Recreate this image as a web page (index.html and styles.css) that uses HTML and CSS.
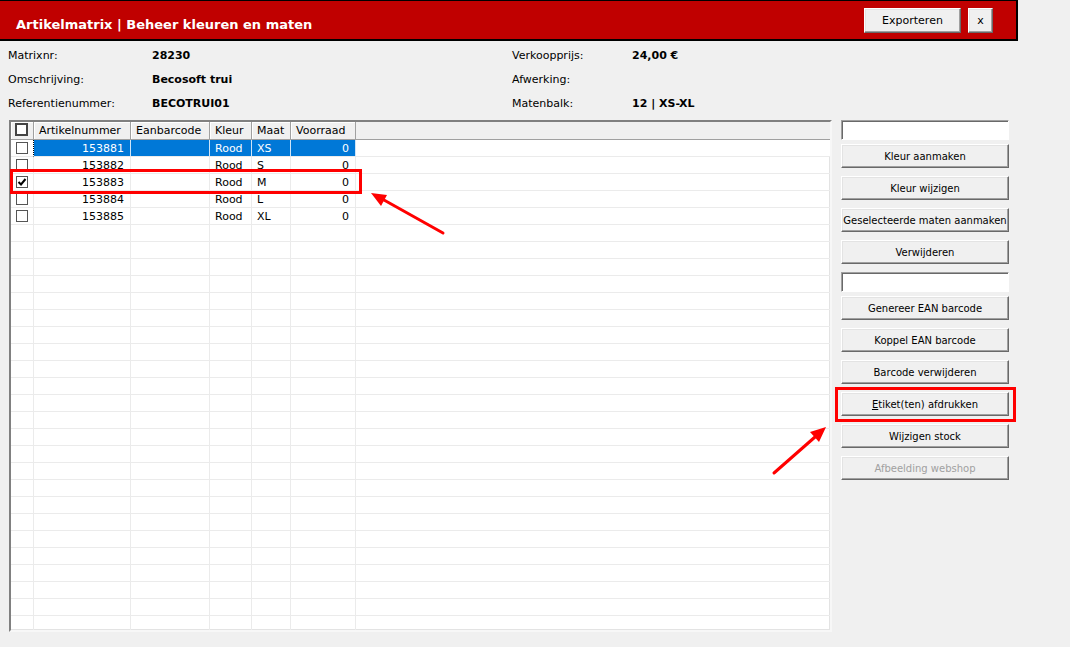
FILE: index.html
```html
<!DOCTYPE html>
<html lang="nl">

<head>
    <meta charset="UTF-8">
    <meta name="viewport" content="width=device-width, initial-scale=1.0">
    <title>Artikelmatrix</title>
    <link rel="stylesheet" href="styles.css">
</head>

<body>
    <div class="titlebar">
        <h1>Artikelmatrix | Beheer kleuren en maten</h1>
        <div class="title-actions">
            <button class="btn btn-export">Exporteren</button>
            <button class="btn btn-close">x</button>
        </div>
    </div>

    <div class="info">
        <span class="label">Matrixnr:</span>
        <span class="value">28230</span>
        <span class="label">Verkoopprijs:</span>
        <span class="value">24,00 €</span>

        <span class="label">Omschrijving:</span>
        <span class="value">Becosoft trui</span>
        <span class="label">Afwerking:</span>
        <span class="value"></span>

        <span class="label">Referentienummer:</span>
        <span class="value">BECOTRUI01</span>
        <span class="label">Matenbalk:</span>
        <span class="value">12 | XS-XL</span>
    </div>

    <div class="main">
        <div class="grid" id="grid">
            <div class="row head">
                <div class="cell"><span class="check head-check"></span></div>
                <div class="cell">Artikelnummer</div>
                <div class="cell">Eanbarcode</div>
                <div class="cell">Kleur</div>
                <div class="cell">Maat</div>
                <div class="cell">Voorraad</div>
                <div class="cell filler"></div>
            </div>
            <div class="row selected">
                <div class="cell focus"><span class="check"></span></div>
                <div class="cell num">153881</div>
                <div class="cell"></div>
                <div class="cell">Rood</div>
                <div class="cell">XS</div>
                <div class="cell num">0</div>
                <div class="cell filler"></div>
            </div>
            <div class="row">
                <div class="cell"><span class="check"></span></div>
                <div class="cell num">153882</div>
                <div class="cell"></div>
                <div class="cell">Rood</div>
                <div class="cell">S</div>
                <div class="cell num">0</div>
                <div class="cell filler"></div>
            </div>
            <div class="row">
                <div class="cell">
                    <span class="check">
                        <svg width="10" height="10" viewBox="0 0 10 10"><path d="M1.5 5 L4 7.5 L8.5 2" fill="none" stroke="#000" stroke-width="2"/></svg>
                    </span>
                </div>
                <div class="cell num">153883</div>
                <div class="cell"></div>
                <div class="cell">Rood</div>
                <div class="cell">M</div>
                <div class="cell num">0</div>
                <div class="cell filler"></div>
            </div>
            <div class="row">
                <div class="cell"><span class="check"></span></div>
                <div class="cell num">153884</div>
                <div class="cell"></div>
                <div class="cell">Rood</div>
                <div class="cell">L</div>
                <div class="cell num">0</div>
                <div class="cell filler"></div>
            </div>
            <div class="row">
                <div class="cell"><span class="check"></span></div>
                <div class="cell num">153885</div>
                <div class="cell"></div>
                <div class="cell">Rood</div>
                <div class="cell">XL</div>
                <div class="cell num">0</div>
                <div class="cell filler"></div>
            </div>
        </div>

        <div class="side">
            <div class="field"></div>
            <button class="btn side-btn">Kleur aanmaken</button>
            <button class="btn side-btn">Kleur wijzigen</button>
            <button class="btn side-btn">Geselecteerde maten aanmaken</button>
            <button class="btn side-btn">Verwijderen</button>
            <div class="field"></div>
            <button class="btn side-btn">Genereer EAN barcode</button>
            <button class="btn side-btn">Koppel EAN barcode</button>
            <button class="btn side-btn">Barcode verwijderen</button>
            <button class="btn side-btn"><u>E</u>tiket(ten) afdrukken</button>
            <button class="btn side-btn">Wijzigen stock</button>
            <button class="btn side-btn" disabled>Afbeelding webshop</button>
        </div>
    </div>

    <!-- annotaties -->
    <div class="mark mark-row"></div>
    <div class="mark mark-btn"></div>
    <svg class="arrows" width="1070" height="647" viewBox="0 0 1070 647">
        <line x1="443" y1="233" x2="384" y2="200" stroke="#f00" stroke-width="3" stroke-linecap="round"/>
        <polygon points="371,193 387,195 381,206" fill="#f00"/>
        <line x1="774" y1="473" x2="815" y2="437" stroke="#f00" stroke-width="3" stroke-linecap="round"/>
        <polygon points="826,427 819,442 810,432" fill="#f00"/>
    </svg>

    <script>
        // lege rijen onder de artikelen
        var grid = document.getElementById('grid');
        for (var i = 0; i < 24; i++) {
            var row = document.createElement('div');
            row.className = 'row';
            for (var c = 0; c < 7; c++) {
                var cell = document.createElement('div');
                cell.className = c === 6 ? 'cell filler' : 'cell';
                row.appendChild(cell);
            }
            grid.appendChild(row);
        }
    </script>
</body>

</html>
```

FILE: styles.css
```css
body {
    margin: 0;
    background-color: #f0f0f0;
    font-family: "DejaVu Sans", Verdana, sans-serif;
    font-size: 11px;
    color: #000;
    width: 1070px;
    height: 647px;
    overflow: hidden;
    position: relative;
}

.titlebar {
    box-sizing: border-box;
    width: 1018px;
    height: 41px;
    background-color: #c00000;
    border-top: 1px solid #000;
    border-right: 2px solid #000;
    border-bottom: 2px solid #000;
    display: flex;
    justify-content: space-between;
    align-items: flex-start;
}

h1 {
    margin: 0;
    padding: 16px 0 0 16px;
    font-size: 13px;
    line-height: 16px;
    font-weight: bold;
    color: #fff;
}

.title-actions {
    display: flex;
    gap: 7px;
    padding: 7px 23px 0 0;
}

.btn {
    box-sizing: border-box;
    font-family: "DejaVu Sans", Verdana, sans-serif;
    font-size: 10px;
    color: #000;
    background-color: #f0f0f0;
    border: 1px solid;
    border-color: #fff #696969 #696969 #fff;
    box-shadow: inset -1px -1px #a0a0a0, inset 1px 1px #e3e3e3;
    padding: 0;
    margin: 0;
}

.btn-export {
    width: 97px;
    height: 25px;
    font-size: 11px;
}

.btn-close {
    width: 25px;
    height: 25px;
    font-size: 11px;
}

.info {
    display: grid;
    grid-template-columns: 144px 360px 120px auto;
    grid-auto-rows: 24px;
    align-items: center;
    padding: 2px 0 0 8px;
}

.value {
    font-weight: bold;
}

.main {
    display: flex;
    gap: 9px;
    padding: 5px 0 0 9px;
}

.grid {
    box-sizing: border-box;
    width: 823px;
    height: 512px;
    overflow: hidden;
    background-color: #fff;
    border: 2px solid;
    border-color: #808080 #f7f7f7 #f7f7f7 #808080;
    box-shadow: inset -1px -1px #e3e3e3;
}

.row {
    display: grid;
    grid-template-columns: 23px 97px 79px 42px 39px 65px 1fr;
    height: 17px;
}

.cell {
    box-sizing: border-box;
    border-right: 1px solid #ebebeb;
    border-bottom: 1px solid #ebebeb;
    padding: 1px 5px 0 5px;
    line-height: 16px;
    white-space: nowrap;
    overflow: hidden;
}

.cell.num {
    text-align: right;
    padding-right: 6px;
}

.cell.filler {
    border-right: none;
}

.head {
    height: 18px;
}

.head .cell {
    background-color: #f0f0f0;
    border-right: 1px solid #a0a0a0;
    border-bottom: 1px solid #a0a0a0;
    box-shadow: inset 1px 1px #fff;
    padding-top: 1px;
    line-height: 16px;
}

.head .cell.filler {
    border-right: none;
    box-shadow: none;
}

.selected .cell {
    background-color: #0078d7;
    color: #fff;
    border-right-color: #cfe4f7;
}

.selected .cell:first-child,
.selected .cell.filler {
    background-color: #fff;
}

.selected .cell.focus {
    border-right: 1px dotted #000;
}

.check {
    box-sizing: border-box;
    display: flex;
    align-items: center;
    justify-content: center;
    width: 12px;
    height: 12px;
    margin: 1px 0 0 0;
    background-color: #fff;
    border: 1px solid #555;
}

.head-check {
    width: 13px;
    height: 13px;
    margin-left: -1px;
    margin-top: 0;
    border: 2px solid #444;
}

.side {
    width: 168px;
    display: flex;
    flex-direction: column;
}

.field {
    box-sizing: border-box;
    height: 20px;
    margin-bottom: 4px;
    background-color: #fff;
    border: 1px solid;
    border-color: #a0a0a0 #fff #fff #a0a0a0;
    box-shadow: inset 1px 1px #696969;
}

.side-btn {
    height: 24px;
    margin-bottom: 8px;
}

.side-btn:disabled {
    color: #a0a0a0;
}

.mark {
    position: absolute;
    box-sizing: border-box;
    border: 3px solid #f00;
}

.mark-row {
    left: 10px;
    top: 169px;
    width: 352px;
    height: 25px;
}

.mark-btn {
    left: 835px;
    top: 387px;
    width: 181px;
    height: 35px;
}

.arrows {
    position: absolute;
    left: 0;
    top: 0;
    pointer-events: none;
}
```
